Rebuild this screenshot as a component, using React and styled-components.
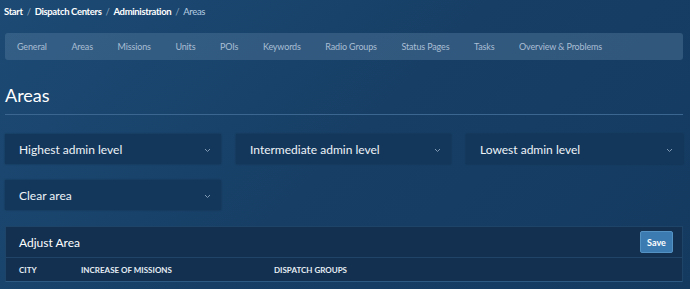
import styled, { createGlobalStyle } from 'styled-components'

const GlobalStyle = createGlobalStyle`
  html, body {
    margin: 0;
    padding: 0;
    height: 100%;
  }
  body {
    background: linear-gradient(135deg, #1c4a74 0%, #173f66 50%, #143a60 100%);
    font-family: Lato, "Liberation Sans", sans-serif;
    color: #ffffff;
    overflow: hidden;
  }
`

const tabs = ['General', 'Areas', 'Missions', 'Units', 'POIs', 'Keywords', 'Radio Groups', 'Status Pages', 'Tasks', 'Overview & Problems']

export default function App() {
    return (
        <>
            <GlobalStyle />
            <Page>
                <Breadcrumb>
                    <Crumb>Start</Crumb>
                    <Sep>/</Sep>
                    <Crumb>Dispatch Centers</Crumb>
                    <Sep>/</Sep>
                    <Crumb>Administration</Crumb>
                    <Sep>/</Sep>
                    <Crumb $active>Areas</Crumb>
                </Breadcrumb>
                <Nav>
                    {tabs.map((tab) => <Tab key={tab}>{tab}</Tab>)}
                </Nav>
                <Title>Areas</Title>
                <Selects>
                    <Select>Highest admin level<Chevron /></Select>
                    <Select>Intermediate admin level<Chevron /></Select>
                    <Select>Lowest admin level<Chevron /></Select>
                    <Select>Clear area<Chevron /></Select>
                </Selects>
                <Panel>
                    <PanelHeader>
                        <span>Adjust Area</span>
                        <SaveButton>Save</SaveButton>
                    </PanelHeader>
                    <TableHead>
                        <Col $width="62px">City</Col>
                        <Col $width="193px">Increase of missions</Col>
                        <Col>Dispatch Groups</Col>
                    </TableHead>
                </Panel>
            </Page>
        </>
    )
}

function Chevron() {
    return (
        <ChevronIcon width="7" height="5" viewBox="0 0 7 5">
            <path d="M1 1 L3.5 3.5 L6 1" fill="none" stroke="#7f98b3" strokeWidth="1" />
        </ChevronIcon>
    )
}

const Page = styled.div`
padding: 0 7px 0 5px;
`
const Breadcrumb = styled.div`
display: flex;
align-items: center;
height: 22px;
margin-left: -1px;
font-size: 9.5px;
letter-spacing: -0.35px;
white-space: nowrap;
`
const Crumb = styled.span`
font-weight: ${(p) => (p.$active ? 400 : 700)};
color: ${(p) => (p.$active ? '#b6cde3' : '#ffffff')};
`
const Sep = styled.span`
color: #8aa3bd;
margin: 0 4px;
`
const Nav = styled.div`
margin-top: 11px;
height: 27px;
display: flex;
align-items: center;
background-color: rgba(82, 120, 156, 0.45);
border-radius: 3px;
`
const Tab = styled.div`
padding: 0 12.3px;
font-size: 9px;
letter-spacing: -0.15px;
white-space: nowrap;
color: #a9bed4;
&:first-child {
    padding-left: 12px;
}
`
const Title = styled.h1`
margin: 0;
padding: 25px 0 9px 0;
font-size: 18px;
font-weight: 400;
line-height: 20px;
border-bottom: 1px solid #3b6690;
`
const Selects = styled.div`
margin-top: 19px;
display: grid;
grid-template-columns: 216px 215px 217px;
column-gap: 15px;
row-gap: 16px;
`
const Select = styled.div`
height: 30px;
display: flex;
align-items: center;
justify-content: space-between;
padding: 0 10px 0 14px;
background-color: #13375b;
box-shadow: 0 0 2px rgba(0, 0, 0, 0.25);
font-size: 12px;
color: #eef3f8;
`
const ChevronIcon = styled.svg`
margin-top: 2px;
`
const Panel = styled.div`
margin-top: 16px;
background-color: #133050;
border: 1px solid #1e4568;
border-bottom-color: #2c5a82;
`
const PanelHeader = styled.div`
height: 30px;
display: flex;
align-items: center;
justify-content: space-between;
padding: 0 9px 0 13px;
border-bottom: 1px solid #1f4468;
font-size: 12px;
`
const SaveButton = styled.button`
width: 33px;
height: 22px;
padding: 0;
background-color: #3b7bb2;
border: 1px solid #5592c4;
border-radius: 2px;
color: #ffffff;
font-family: Lato, "Liberation Sans", sans-serif;
font-size: 9px;
font-weight: 700;
`
const TableHead = styled.div`
height: 23px;
display: flex;
align-items: center;
padding-left: 13px;
`
const Col = styled.div`
width: ${(p) => p.$width || 'auto'};
font-size: 8px;
font-weight: 700;
text-transform: uppercase;
color: #e6edf4;
`
